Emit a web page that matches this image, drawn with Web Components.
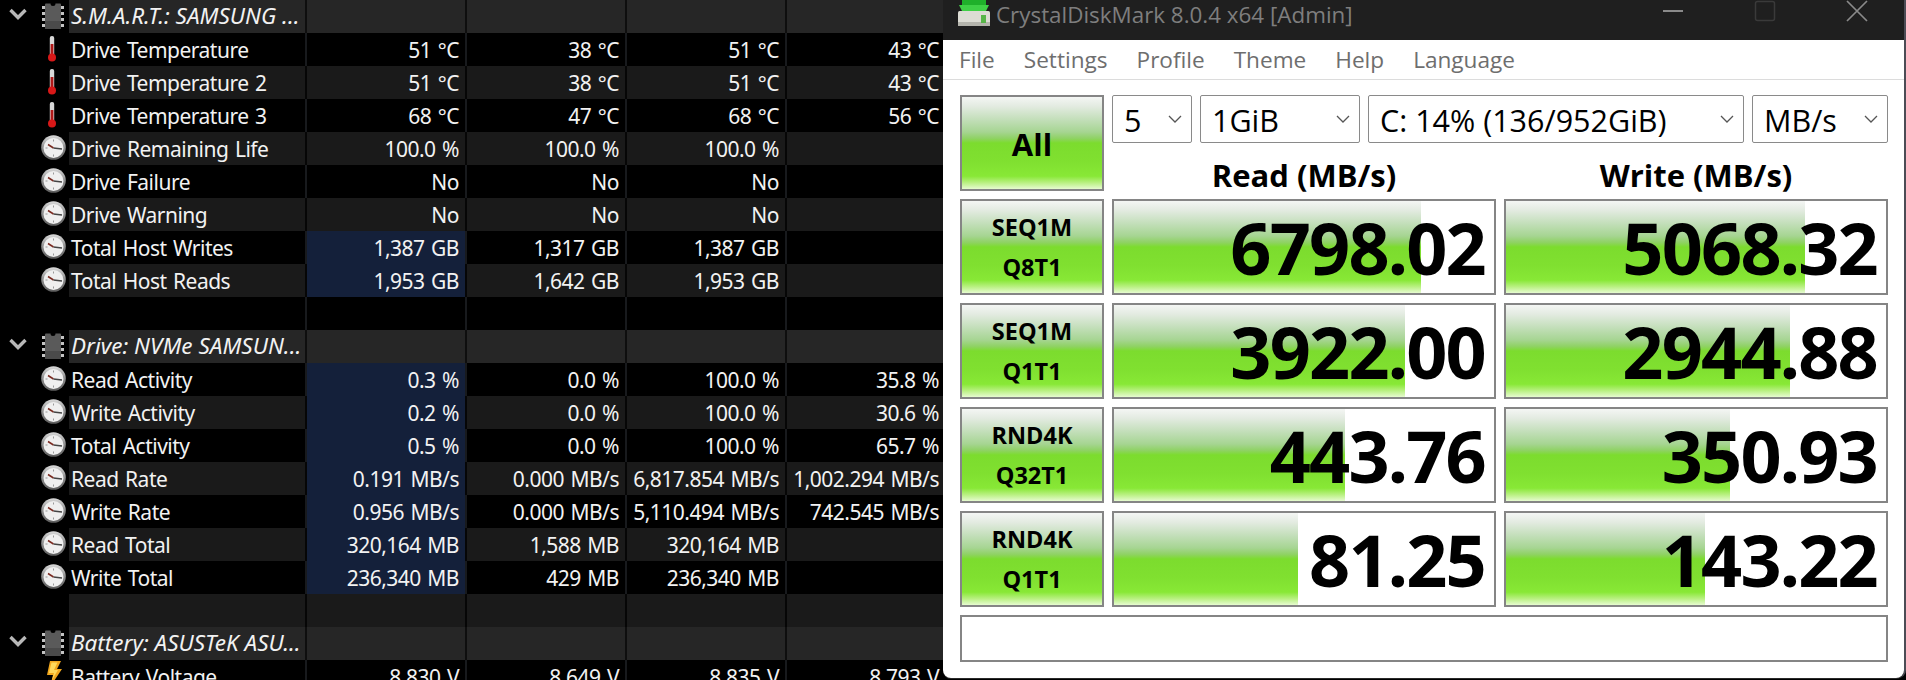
<!DOCTYPE html>
<html>
<head>
<meta charset="utf-8">
<title>HWiNFO and CrystalDiskMark</title>
<style>
	html, body { margin: 0; height: 100%; background: #000; overflow: hidden; }
	body { display: flex; width: 1906px; height: 680px; }
</style>
</head>
<body>
<hw-panel>
	<hw-row kind="head"><hw-cell label head>S.M.A.R.T.: SAMSUNG ...</hw-cell><hw-cell></hw-cell><hw-cell></hw-cell><hw-cell></hw-cell><hw-cell></hw-cell></hw-row>
	<hw-row kind="temp"><hw-cell label>Drive Temperature</hw-cell><hw-cell>51 °C</hw-cell><hw-cell>38 °C</hw-cell><hw-cell>51 °C</hw-cell><hw-cell last>43 °C</hw-cell></hw-row>
	<hw-row kind="temp" alt><hw-cell label>Drive Temperature 2</hw-cell><hw-cell>51 °C</hw-cell><hw-cell>38 °C</hw-cell><hw-cell>51 °C</hw-cell><hw-cell last>43 °C</hw-cell></hw-row>
	<hw-row kind="temp"><hw-cell label>Drive Temperature 3</hw-cell><hw-cell>68 °C</hw-cell><hw-cell>47 °C</hw-cell><hw-cell>68 °C</hw-cell><hw-cell last>56 °C</hw-cell></hw-row>
	<hw-row kind="clock" alt><hw-cell label>Drive Remaining Life</hw-cell><hw-cell>100.0 %</hw-cell><hw-cell>100.0 %</hw-cell><hw-cell>100.0 %</hw-cell><hw-cell last></hw-cell></hw-row>
	<hw-row kind="clock"><hw-cell label>Drive Failure</hw-cell><hw-cell>No</hw-cell><hw-cell>No</hw-cell><hw-cell>No</hw-cell><hw-cell last></hw-cell></hw-row>
	<hw-row kind="clock" alt><hw-cell label>Drive Warning</hw-cell><hw-cell>No</hw-cell><hw-cell>No</hw-cell><hw-cell>No</hw-cell><hw-cell last></hw-cell></hw-row>
	<hw-row kind="clock"><hw-cell label>Total Host Writes</hw-cell><hw-cell hi>1,387 GB</hw-cell><hw-cell>1,317 GB</hw-cell><hw-cell>1,387 GB</hw-cell><hw-cell last></hw-cell></hw-row>
	<hw-row kind="clock" alt><hw-cell label>Total Host Reads</hw-cell><hw-cell hi>1,953 GB</hw-cell><hw-cell>1,642 GB</hw-cell><hw-cell>1,953 GB</hw-cell><hw-cell last></hw-cell></hw-row>
	<hw-row><hw-cell label></hw-cell><hw-cell></hw-cell><hw-cell></hw-cell><hw-cell></hw-cell><hw-cell last></hw-cell></hw-row>
	<hw-row kind="head"><hw-cell label head>Drive: NVMe SAMSUN...</hw-cell><hw-cell></hw-cell><hw-cell></hw-cell><hw-cell></hw-cell><hw-cell></hw-cell></hw-row>
	<hw-row kind="clock"><hw-cell label>Read Activity</hw-cell><hw-cell hi>0.3 %</hw-cell><hw-cell>0.0 %</hw-cell><hw-cell>100.0 %</hw-cell><hw-cell last>35.8 %</hw-cell></hw-row>
	<hw-row kind="clock" alt><hw-cell label>Write Activity</hw-cell><hw-cell hi>0.2 %</hw-cell><hw-cell>0.0 %</hw-cell><hw-cell>100.0 %</hw-cell><hw-cell last>30.6 %</hw-cell></hw-row>
	<hw-row kind="clock"><hw-cell label>Total Activity</hw-cell><hw-cell hi>0.5 %</hw-cell><hw-cell>0.0 %</hw-cell><hw-cell>100.0 %</hw-cell><hw-cell last>65.7 %</hw-cell></hw-row>
	<hw-row kind="clock" alt><hw-cell label>Read Rate</hw-cell><hw-cell hi>0.191 MB/s</hw-cell><hw-cell>0.000 MB/s</hw-cell><hw-cell>6,817.854 MB/s</hw-cell><hw-cell last>1,002.294 MB/s</hw-cell></hw-row>
	<hw-row kind="clock"><hw-cell label>Write Rate</hw-cell><hw-cell hi>0.956 MB/s</hw-cell><hw-cell>0.000 MB/s</hw-cell><hw-cell>5,110.494 MB/s</hw-cell><hw-cell last>742.545 MB/s</hw-cell></hw-row>
	<hw-row kind="clock" alt><hw-cell label>Read Total</hw-cell><hw-cell hi>320,164 MB</hw-cell><hw-cell>1,588 MB</hw-cell><hw-cell>320,164 MB</hw-cell><hw-cell last></hw-cell></hw-row>
	<hw-row kind="clock"><hw-cell label>Write Total</hw-cell><hw-cell hi>236,340 MB</hw-cell><hw-cell>429 MB</hw-cell><hw-cell>236,340 MB</hw-cell><hw-cell last></hw-cell></hw-row>
	<hw-row alt><hw-cell label></hw-cell><hw-cell></hw-cell><hw-cell></hw-cell><hw-cell></hw-cell><hw-cell last></hw-cell></hw-row>
	<hw-row kind="head"><hw-cell label head>Battery: ASUSTeK ASU...</hw-cell><hw-cell></hw-cell><hw-cell></hw-cell><hw-cell></hw-cell><hw-cell></hw-cell></hw-row>
	<hw-row kind="bolt"><hw-cell label>Battery Voltage</hw-cell><hw-cell>8.830 V</hw-cell><hw-cell>8.649 V</hw-cell><hw-cell>8.835 V</hw-cell><hw-cell last>8.793 V</hw-cell></hw-row>
</hw-panel>

<cdm-window>
	<span slot="title">CrystalDiskMark 8.0.4 x64 [Admin]</span>
	<cdm-menu slot="menu">
		<span>File</span><span>Settings</span><span>Profile</span><span>Theme</span><span>Help</span><span>Language</span>
	</cdm-menu>

	<cdm-test big>All</cdm-test>
	<cdm-controls>
		<cdm-combo slot="combo" style="width:80px">5</cdm-combo>
		<cdm-combo slot="combo" style="width:160px">1GiB</cdm-combo>
		<cdm-combo slot="combo" style="width:376px">C: 14% (136/952GiB)</cdm-combo>
		<cdm-combo slot="combo" style="width:136px">MB/s</cdm-combo>
		<cdm-heading>Read (MB/s)</cdm-heading>
		<cdm-heading>Write (MB/s)</cdm-heading>
	</cdm-controls>

	<cdm-test>SEQ1M<br>Q8T1</cdm-test>
	<cdm-result fill="309">6798.02</cdm-result>
	<cdm-result fill="301">5068.32</cdm-result>

	<cdm-test>SEQ1M<br>Q1T1</cdm-test>
	<cdm-result fill="293">3922.00</cdm-result>
	<cdm-result fill="286">2944.88</cdm-result>

	<cdm-test>RND4K<br>Q32T1</cdm-test>
	<cdm-result fill="233">443.76</cdm-result>
	<cdm-result fill="226">350.93</cdm-result>

	<cdm-test>RND4K<br>Q1T1</cdm-test>
	<cdm-result fill="186">81.25</cdm-result>
	<cdm-result fill="201">143.22</cdm-result>

	<cdm-status></cdm-status>
</cdm-window>

<script>
const BAR_GRADIENT = `linear-gradient(180deg,
	#f4f6f4 0%, #e3ebe1 10%, #c4dfbb 24%, #a6d592 38%, #8fd264 45%,
	#7cdc2e 50%, #80e030 70%, #88e836 86%, #b8f080 93%, #e6fbd0 100%)`;

function define(name, css, html, extra = {}) {
	const cls = class extends HTMLElement {
		constructor() {
			super();
			this.attachShadow({ mode: 'open' });
			this.shadowRoot.innerHTML = `<style>${css}</style>${html}`;
		}
		connectedCallback() {
			if (extra.init) extra.init(this);
		}
	};
	customElements.define(name, cls);
}

const ICONS = {
	head: `<svg class="chev" width="18" height="13" viewBox="0 0 18 13"><path d="M1.5 2 9 9.5 16.5 2" fill="none" stroke="#b8b8b8" stroke-width="3.4"/></svg>
		<svg class="chip" width="22" height="28" viewBox="0 0 22 28">
			<g fill="#c4c4c4"><rect x="0" y="4" width="3" height="3"/><rect x="0" y="10" width="3" height="3"/><rect x="0" y="16" width="3" height="3"/><rect x="0" y="22" width="3" height="3"/><rect x="19" y="4" width="3" height="3"/><rect x="19" y="10" width="3" height="3"/><rect x="19" y="16" width="3" height="3"/><rect x="19" y="22" width="3" height="3"/></g>
			<path d="M4 1.5h4.5a2.5 2.5 0 0 0 5 0H18a1 1 0 0 1 1 1V26a1 1 0 0 1-1 1H4a1 1 0 0 1-1-1V2.500a1 1 0 0 1 1-1z" fill="#5a5a5a"/>
			<rect x="3" y="19" width="16" height="8" fill="#4a4a4a"/>
		</svg>`,
	temp: `<svg class="temp" width="10" height="28" viewBox="0 0 10 28">
			<rect x="2.800" y="1" width="4.400" height="20" rx="2" fill="#d8d8d8"/>
			<rect x="3.600" y="9" width="2.800" height="12" fill="#b01818"/>
			<circle cx="5" cy="22.500" r="4" fill="#d81818"/>
		</svg>`,
	clock: `<svg class="clock" width="25" height="25" viewBox="0 0 25 25">
			<defs><linearGradient id="rim" x1="0" y1="0" x2="0" y2="1"><stop offset="0" stop-color="#dadada"/><stop offset=".5" stop-color="#8e8e8e"/><stop offset="1" stop-color="#5c5c5c"/></linearGradient></defs>
			<circle cx="12.500" cy="12.500" r="12.300" fill="url(#rim)"/>
			<circle cx="12.500" cy="13" r="10" fill="#efefef"/>
			<path d="M12.500 13 7 9.500" stroke="#7a2a20" stroke-width="1.500"/>
			<path d="M12.500 13 21 14" stroke="#444" stroke-width="1.500"/>
			<g fill="#999"><rect x="12" y="4.500" width="1" height="2"/><rect x="12" y="19.500" width="1" height="2"/><rect x="4.500" y="12.500" width="2" height="1"/></g>
		</svg>`,
	bolt: `<svg class="bolt" width="17" height="26" viewBox="0 0 17 26"><path d="M5 0h11l-4 8h5L5 26l3-12H2z" fill="#f2a81e"/><path d="M6.500 1.500h6L9 9h4L7 19l2-7H4z" fill="#ffd95a"/></svg>`
};

define('hw-panel', `
	:host { display: block; width: 943px; height: 680px; overflow: hidden; flex: none; background: #000; }
`, `<slot></slot>`);

customElements.define('hw-row', class extends HTMLElement {
	constructor() {
		super();
		this.attachShadow({ mode: 'open' });
		const kind = this.getAttribute('kind');
		this.shadowRoot.innerHTML = `<style>
			:host {
				display: grid;
				grid-template-columns: 69px 236px 160px 160px 160px 158px;
				height: 33px;
				background: #181a1d;
				--stripe: #000;
				color: #f2f2f2;
			}
			:host([alt]) { --stripe: #1a1a1a; background: #060606; }
			:host([kind="head"]) { --stripe: #262626; background: #0e0e0e; }
			.icons { background: #000; position: relative; display: flex; align-items: center; }
			.chev { position: absolute; left: 9px; top: 8px; }
			.chip { position: absolute; left: 42px; top: 2px; }
			.temp { position: absolute; left: 47px; top: 2px; }
			.clock { position: absolute; left: 41px; top: 3px; }
			.bolt { position: absolute; left: 45px; top: 1px; }
		</style>
		<div class="icons">${kind ? ICONS[kind] : ''}</div>
		<slot></slot>`;
	}
});

define('hw-cell', `
	:host {
		display: flex;
		align-items: center;
		justify-content: flex-end;
		box-sizing: border-box;
		margin-left: 2px;
		padding: 0 6px 0 0;
		background: var(--stripe);
		font: 21px "Noto Sans", sans-serif;
		letter-spacing: -.5px;
		word-spacing: 1.500px;
		white-space: nowrap;
		overflow: hidden;
		min-width: 0;
	}
	:host([label]) { margin-left: 0; padding: 0 0 0 2px; justify-content: flex-start; }
	:host([head]) { font-style: italic; font-size: 22.500px; letter-spacing: 0; word-spacing: 0; padding-bottom: 2px; }
	:host([hi]) { background: #14203a; }
	:host([last]) { padding-right: 4px; }
`, `<slot></slot>`);

define('cdm-window', `
	:host {
		display: flex;
		flex-direction: column;
		flex: none;
		box-sizing: border-box;
		width: 961px;
		height: 678px;
		background: #fff;
		border-radius: 0 0 8px 8px;
		overflow: hidden;
		color: #000;
		box-shadow: 0 1px 0 #2a2a2a, 2px 0 0 #4c4c55;
		font-family: "Open Sans", "Noto Sans", sans-serif;
	}
	.title {
		display: flex;
		height: 40px;
		flex: none;
		background: #1f1f1f;
		color: #7e7e7e;
		font-size: 22.400px;
		line-height: 29px;
	}
	.logo { margin: 0 5px 0 14px; }
	.ctrls { margin-left: auto; display: flex; height: 22px; margin-right: 1px; }
	.ctrls svg { width: 92px; height: 22px; }
	.menu { flex: none; }
	.body {
		display: grid;
		grid-template-columns: 144px 384px 384px;
		grid-template-rows: repeat(5, 96px) 47px;
		gap: 8px;
		padding: 15px 16px 16px 17px;
	}
`, `
	<div class="title">
		<svg class="logo" width="34" height="27" viewBox="0 0 34 27">
			<rect x="5" y="0" width="24" height="5" fill="#1fb02a"/>
			<path d="M2 5h30l-3 6H5z" fill="#3fd046"/>
			<rect x="1" y="11" width="32" height="15" rx="1.500" fill="#dcdcd4"/>
			<rect x="1" y="22" width="32" height="4" fill="#b4b4ac"/>
			<rect x="24" y="15" width="5" height="8" fill="#57b548"/>
		</svg>
		<slot name="title"></slot>
		<div class="ctrls">
			<svg viewBox="0 0 92 22"><rect x="36" y="10" width="20" height="2" fill="#8a8a8a"/></svg>
			<svg viewBox="0 0 92 22"><rect x="36.500" y="1.500" width="19" height="19" rx="2" fill="none" stroke="#3a3a3a" stroke-width="1.500"/></svg>
			<svg viewBox="0 0 92 22"><path d="M36 1 56 21M56 1 36 21" stroke="#8a8a8a" stroke-width="1.700"/></svg>
		</div>
	</div>
	<div class="menu"><slot name="menu"></slot></div>
	<div class="body"><slot></slot></div>
`);

define('cdm-menu', `
	:host {
		display: flex;
		gap: 29px;
		height: 39px;
		padding-left: 16px;
		border-bottom: 1px solid #dcdcdc;
		color: #6e6e6e;
		font: 22.600px/39px "Open Sans", sans-serif;
	}
`, `<slot></slot>`);

define('cdm-test', `
	:host {
		display: flex;
		align-items: center;
		justify-content: center;
		box-sizing: border-box;
		border: 2px solid #858585;
		background: ${BAR_GRADIENT};
		text-align: center;
		font: 700 23.500px/40px "Open Sans", sans-serif;
	}
	:host([big]) { font-size: 31px; padding-top: 2px; }
`, `<div><slot></slot></div>`);

define('cdm-controls', `
	:host { grid-column: 2 / 4; display: flex; flex-direction: column; }
	.combos { display: flex; gap: 8px; height: 48px; }
	.heads { display: grid; grid-template-columns: 384px 384px; column-gap: 8px; }
`, `<div class="combos"><slot name="combo"></slot></div><div class="heads"><slot></slot></div>`);

define('cdm-combo', `
	:host {
		display: flex;
		align-items: center;
		justify-content: space-between;
		box-sizing: border-box;
		height: 48px;
		padding: 2px 9px 0 11px;
		border: 1.500px solid #8a8a8a;
		border-radius: 2px;
		font: 30.500px "Open Sans", sans-serif;
		white-space: nowrap;
	}
	svg { margin-bottom: 2px; }
`, `<span><slot></slot></span>
	<svg width="14" height="8" viewBox="0 0 14 8"><path d="M1 1l6 6 6-6" fill="none" stroke="#555" stroke-width="1.300"/></svg>`);

define('cdm-heading', `
	:host {
		display: block;
		padding-top: 17px;
		text-align: center;
		font: 700 31px/31px "Open Sans", sans-serif;
		white-space: nowrap;
	}
`, `<slot></slot>`);

define('cdm-result', `
	:host {
		display: block;
		position: relative;
		box-sizing: border-box;
		border: 2px solid #858585;
		background: #fff;
		overflow: hidden;
	}
	.bar { position: absolute; left: 0; top: 0; bottom: 0; background: ${BAR_GRADIENT}; }
	.val {
		position: relative;
		height: 100%;
		display: flex;
		align-items: center;
		justify-content: flex-end;
		padding-right: 9px;
		font: 700 72px/1 "Noto Sans", sans-serif;
		letter-spacing: -1.800px;
	}
`, `<div class="bar"></div><div class="val"><slot></slot></div>`, {
	init(el) {
		el.shadowRoot.querySelector('.bar').style.width = el.getAttribute('fill') - 2 + 'px';
	}
});

define('cdm-status', `
	:host {
		display: block;
		grid-column: 1 / 4;
		height: 47px;
		box-sizing: border-box;
		border: 2px solid #858585;
	}
`, ``);
</script>
</body>
</html>
